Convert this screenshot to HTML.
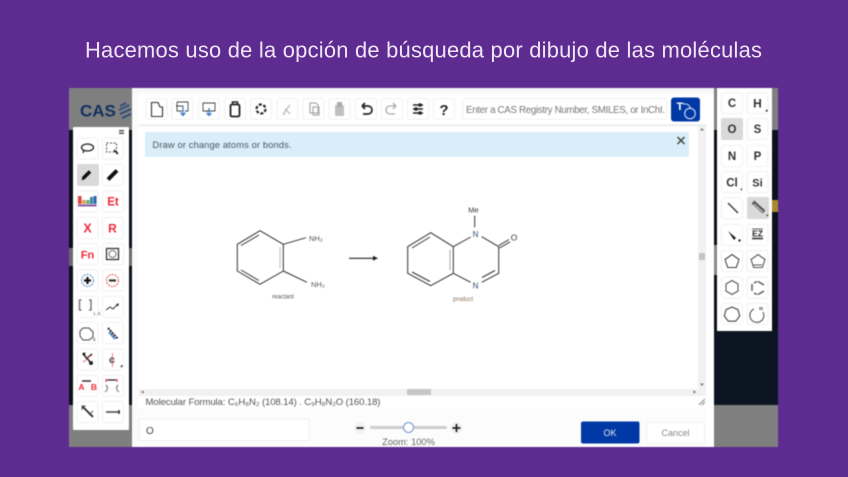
<!DOCTYPE html>
<html lang="es"><head><meta charset="utf-8"><title>Dibujo de moléculas</title>
<style>
html,body{margin:0;padding:0;width:848px;height:477px;overflow:hidden;background:#5e2b90}
svg{display:block;font-family:"Liberation Sans",sans-serif}
.b{fill:#fff;stroke:#f1f1f1;stroke-width:1}
.i{fill:none;stroke:#222;stroke-width:1.3}
.g{fill:none;stroke:#aaa;stroke-width:1.2}
.m{fill:none;stroke:#444;stroke-width:.9}
.blur{filter:blur(.55px)}
.tb{filter:blur(.2px)}
</style></head><body>
<svg width="848" height="477" viewBox="0 0 848 477" xmlns="http://www.w3.org/2000/svg">
<rect width="848" height="477" fill="#5e2b90"/>
<text class="tb" x="85" y="57.500" font-size="21.900" fill="#eee6f4" textLength="677" lengthAdjust="spacing">Hacemos uso de la opción de búsqueda por dibujo de las moléculas</text>
<g class="blur">
<!-- backdrop -->
<rect x="69" y="88" width="709" height="359" fill="#7f7f7f"/>
<rect x="69" y="130" width="709" height="275" fill="#0a1119"/>
<rect x="69" y="248" width="4" height="18" fill="#6a6a6a"/>
<rect x="129" y="248" width="3" height="18" fill="#6a6a6a"/>
<rect x="714" y="245" width="3" height="30" fill="#8a8a8a"/>
<rect x="772" y="200" width="6" height="12" fill="#a88a2c"/>
<rect x="714" y="331" width="64" height="74" fill="#0b1622"/>
<text x="80" y="116.500" font-size="17" font-weight="bold" fill="#12305f">CAS</text>
<path d="M120 106l6-3M119 110l10-5M120 114l11-5M122 118l9-4" stroke="#2c4a78" stroke-width="1.800" fill="none"/>
<!-- dialog -->
<rect x="132" y="88" width="582" height="359" fill="#fff"/>
<rect x="132" y="88" width="582" height="5" fill="#f7f7f7"/>
<rect x="132" y="93" width="7" height="354" fill="#fbfbfb"/>
<rect x="139" y="124.500" width="567" height="1.500" fill="#e8e8e8"/>
<!-- top toolbar -->
<rect class="b" x="146" y="98.500" width="21" height="21" rx="2"/>
<rect class="b" x="172" y="98.500" width="21" height="21" rx="2"/>
<rect class="b" x="198.500" y="98.500" width="21" height="21" rx="2"/>
<rect class="b" x="224.500" y="98.500" width="21" height="21" rx="2"/>
<rect class="b" x="250.500" y="98.500" width="21" height="21" rx="2"/>
<rect class="b" x="277" y="98.500" width="21" height="21" rx="2"/>
<rect class="b" x="303" y="98.500" width="21" height="21" rx="2"/>
<rect class="b" x="329" y="98.500" width="21" height="21" rx="2"/>
<rect class="b" x="355.500" y="98.500" width="21" height="21" rx="2"/>
<rect class="b" x="381.500" y="98.500" width="21" height="21" rx="2"/>
<rect class="b" x="407.500" y="98.500" width="21" height="21" rx="2"/>
<rect class="b" x="433.500" y="98.500" width="21" height="21" rx="2"/>
<!-- icons top -->
<path d="M151.500 116.500V102.500h6.500l2 4.500h2.500v9.500z" fill="none" stroke="#333" stroke-width="1.100"/>
<path d="M177 102h11v9h-3M177 102v9h5M176 106h7" class="m"/><path d="M183 106v9M180.500 112.500l2.500 3 2.500-3" fill="none" stroke="#3d7cc4" stroke-width="1.300"/>
<path d="M203 103h12v8h-12zM207 111v1" class="m"/><path d="M209 108v7M206.500 113l2.500 2.500 2.500-2.500" fill="none" stroke="#3d7cc4" stroke-width="1.300"/>
<rect x="230.500" y="104.500" width="9" height="12" rx="1.500" fill="none" stroke="#222" stroke-width="1.800"/><path d="M232.500 104.500v-2.500h5v2.500" fill="none" stroke="#222" stroke-width="1.500"/>
<circle cx="261" cy="109" r="4.500" fill="none" stroke="#222" stroke-width="2.200" stroke-dasharray="3 1.700"/>
<path d="M283 114l7-9M290 114l-5-5M283 113l2 2" fill="none" stroke="#bbb" stroke-width="1.300"/>
<path d="M310 103h6l2 2v8h-8zM313 107h6v8h-6z" class="g"/>
<rect x="335" y="105" width="9" height="11" rx="1" fill="#c0c0c0"/><rect x="337" y="102" width="5" height="5" fill="#aaa"/>
<path d="M362 106h6a4 4 0 010 8h-5M362 106l3-3M362 106l3 3" fill="none" stroke="#222" stroke-width="1.700"/>
<path d="M396 106h-6a4 4 0 000 8h5M396 106l-3-3M396 106l-3 3" fill="none" stroke="#aaa" stroke-width="1.300"/>
<path d="M413 105h10M413 109h10M413 113h10" stroke="#222" stroke-width="1.400"/><circle cx="420" cy="105" r="1.800" fill="#222"/><circle cx="416" cy="109" r="1.800" fill="#222"/><circle cx="420" cy="113" r="1.800" fill="#222"/>
<text x="444" y="115" font-size="15" font-weight="bold" text-anchor="middle" fill="#222">?</text>
<!-- search -->
<rect class="b" x="463" y="98.500" width="204" height="21" rx="2"/>
<text x="466" y="113" font-size="9.800" fill="#777" textLength="199" lengthAdjust="spacing">Enter a CAS Registry Number, SMILES, or InChI.</text>
<rect x="671" y="97.500" width="29" height="24" rx="3" fill="#0039a6"/>
<text x="676.500" y="110" font-size="11" font-weight="bold" fill="#fff">T</text>
<circle cx="690" cy="113.500" r="5.300" fill="none" stroke="#dfe8f7" stroke-width="1"/><path d="M683 104c4-.5 7 1 7.500 5" fill="none" stroke="#dfe8f7" stroke-width="1"/>
<!-- banner -->
<rect x="145" y="132" width="544" height="25" rx="1" fill="#d9eef9"/>
<text x="152.500" y="148" font-size="9.300" fill="#485460" textLength="139">Draw or change atoms or bonds.</text>
<path d="M677.500 137l7 7M684.500 137l-7 7" stroke="#444" stroke-width="1.500"/>
<!-- scrollbars -->
<rect x="698" y="126" width="8" height="270" fill="#f1f1f1"/>
<rect x="699" y="253" width="6" height="7" fill="#c4c4c4"/>
<path d="M702 128l-2 2.500h4zM702 386l-2-2.500h4z" fill="#777"/>
<rect x="139" y="389" width="567" height="7" fill="#f1f1f1"/>
<rect x="407" y="389" width="24" height="6" fill="#c6c6c6"/>
<path d="M141 392l2.500-1.500v3zM696 392l-2.500-1.500v3z" fill="#666"/>
<!-- formula -->
<text x="145.500" y="405" font-size="9.600" fill="#555" textLength="235">Molecular Formula: C₆H₈N₂ (108.14) . C₉H₈N₂O (160.18)</text>
<path d="M699 405l6-6M702 405l3-3" stroke="#888" stroke-width="1"/>
<!-- bottom -->
<rect x="139" y="408" width="567" height="39" fill="#fcfcfc"/>
<rect x="139" y="419" width="170" height="22" rx="2" fill="#fff" stroke="#eee"/>
<text x="146" y="434" font-size="10" fill="#444">O</text>
<circle cx="360" cy="428" r="5.500" fill="#f2f2f2"/><path d="M356.500 428h7" stroke="#222" stroke-width="1.800"/>
<rect x="370" y="426" width="77" height="3" rx="1.500" fill="#cecece"/>
<circle cx="408.500" cy="427.500" r="5" fill="#fff" stroke="#6d94cf" stroke-width="1"/>
<circle cx="456.500" cy="428" r="6" fill="#f2f2f2"/><path d="M452.500 428h8M456.500 424v8" stroke="#222" stroke-width="1.800"/>
<text x="408.500" y="445" font-size="9.300" fill="#666" text-anchor="middle">Zoom: 100%</text>
<rect x="581" y="421.500" width="58.500" height="22" rx="2" fill="#0039a6"/>
<text x="610" y="436" font-size="9" fill="#e4ebf7" text-anchor="middle">OK</text>
<rect class="b" x="646.500" y="422.500" width="58" height="21" rx="2"/>
<text x="675.500" y="436" font-size="9" fill="#888" text-anchor="middle">Cancel</text>
<!-- molecules -->
<g fill="none" stroke="#333" stroke-width="1">
<path d="M260 230.700L283.300 244.300V271L260 284.300L237.300 271V244.300Z"/>
<path d="M241 245.500L259 235M241 270L259 280.500"/><path d="M280 247V268" stroke="#bbb"/>
<path d="M283.300 244.300L306 237.700M283.300 271L307 282.300"/>
<path d="M349 258.300H373" stroke="#222" stroke-width="1.100"/>
<path d="M430.700 232.700L453.300 246.700V273.300L430.700 285.700L407.700 273.300V246.700Z"/>
<path d="M412 248L430 237M412 272L430 281.500"/><path d="M450 250V270" stroke="#aaa"/>
<path d="M453.300 246.700L470.700 237M453.300 273.300L470.700 282.300M481.700 236.700L498.700 246.700V273.300L481.700 282.300M495 270.500L482 277.500M474.700 215.700V227.300"/>
<path d="M498.700 245.700L509 239.500M499.700 248L510 241.800"/>
</g>
<path d="M373 255.800l5 2.500-5 2.500z" fill="#222"/>
<g font-size="7.500" fill="#555">
<text x="309" y="241">NH₂</text><text x="311" y="287">NH₂</text>
<text x="283" y="298.500" font-size="6" text-anchor="middle">reactant</text>
<text x="463" y="301" font-size="6" text-anchor="middle" fill="#8a6a50">product</text>
<text x="473.500" y="212.500" text-anchor="middle" fill="#333">Me</text>
<text x="475.500" y="237" text-anchor="middle" font-size="8" fill="#2f4a70">N</text>
<text x="475.500" y="288.500" text-anchor="middle" font-size="8" fill="#2f4a70">N</text>
<text x="514" y="240.500" text-anchor="middle" font-size="8.500" fill="#333">O</text>
</g>
<!-- left toolbar -->
<rect x="73" y="127" width="56" height="303" rx="1" fill="#fff"/>
<path d="M119 130h5v1.500h-5zM119 132.500h5v1.500h-5z" fill="#555"/>
<rect class="b" x="77" y="138" width="21" height="21" rx="2"/><rect class="b" x="102.500" y="138" width="21" height="21" rx="2"/>
<rect x="77" y="164" width="22" height="22" rx="2" fill="#d9d9d9"/><rect class="b" x="102.500" y="164.500" width="21" height="21" rx="2"/>
<rect class="b" x="77" y="191" width="21" height="21" rx="2"/><rect class="b" x="102.500" y="191" width="21" height="21" rx="2"/>
<rect class="b" x="77" y="217.500" width="21" height="21" rx="2"/><rect class="b" x="102.500" y="217.500" width="21" height="21" rx="2"/>
<rect class="b" x="77" y="243.500" width="21" height="21" rx="2"/><rect class="b" x="102.500" y="243.500" width="21" height="21" rx="2"/>
<rect class="b" x="77" y="270" width="21" height="21" rx="2"/><rect class="b" x="102.500" y="270" width="21" height="21" rx="2"/>
<rect class="b" x="77" y="296.500" width="21" height="21" rx="2"/><rect class="b" x="102.500" y="296.500" width="21" height="21" rx="2"/>
<rect class="b" x="77" y="322.500" width="21" height="21" rx="2"/><rect class="b" x="102.500" y="322.500" width="21" height="21" rx="2"/>
<rect class="b" x="77" y="349" width="21" height="21" rx="2"/><rect class="b" x="102.500" y="349" width="21" height="21" rx="2"/>
<rect class="b" x="77" y="375.500" width="21" height="21" rx="2"/><rect class="b" x="102.500" y="375.500" width="21" height="21" rx="2"/>
<rect class="b" x="77" y="401.500" width="21" height="21" rx="2"/><rect class="b" x="102.500" y="401.500" width="21" height="21" rx="2"/>
<!-- left icons -->
<ellipse cx="87.500" cy="147.500" rx="6" ry="3.500" class="i" stroke-width="1.100"/><path d="M84 150l-1 3" class="i" stroke-width="1.100"/>
<rect x="106.500" y="143" width="10" height="9" fill="none" stroke="#555" stroke-width="1.100" stroke-dasharray="2 1.500"/><path d="M114 150l4 4" stroke="#222" stroke-width="1.600"/>
<path d="M83 178.500l7-7" stroke="#111" stroke-width="3.500"/><path d="M82 180l1.500-2" stroke="#111" stroke-width="1.500"/>
<path d="M108 179.500l9-9" stroke="#111" stroke-width="4"/>
<rect x="78" y="196" width="3.500" height="8" fill="#e0443e"/><rect x="82" y="200" width="4" height="4" fill="#d9a35c"/><rect x="86.500" y="200" width="3" height="4" fill="#6aa37a"/><rect x="90" y="197" width="3" height="7" fill="#2b8a9a"/><rect x="93.500" y="196" width="3" height="8" fill="#3060a8"/><rect x="78" y="204.500" width="18.500" height="2" fill="#8a5ca8"/>
<g font-weight="bold" fill="#ee2b3a" text-anchor="middle">
<text x="113" y="205.500" font-size="11.500">Et</text>
<text x="87.500" y="232.500" font-size="12.500">X</text>
<text x="112.500" y="232.500" font-size="12">R</text>
<text x="87.500" y="258.500" font-size="11">Fn</text>
<text x="81.500" y="390" font-size="8.500">A</text>
<text x="94" y="390" font-size="8.500">B</text>
</g>
<rect x="106.500" y="248.500" width="12" height="11" fill="none" stroke="#333" stroke-width="1.300"/><circle cx="112.500" cy="254" r="3.500" fill="none" stroke="#777" stroke-width="1.100"/>
<circle cx="87.500" cy="280.500" r="6" fill="none" stroke="#4f86cc" stroke-width="1" stroke-dasharray="2 1"/><path d="M84 280.500h7M87.500 277v7" stroke="#111" stroke-width="2.200"/>
<circle cx="112.500" cy="280.500" r="6" fill="none" stroke="#ee4a55" stroke-width="1" stroke-dasharray="2 1"/><path d="M109 280.500h7" stroke="#333" stroke-width="2.200"/>
<path d="M81.500 300h-2v10h2M89 300h2v10h-2" fill="none" stroke="#666" stroke-width="1.300"/><text x="93" y="315" font-size="4.500" fill="#555">1..6</text>
<path d="M106 310l4-3 3 2 4-4" fill="none" stroke="#333" stroke-width="1"/><path d="M116 304l3-.5-1 3z" fill="#222"/>
<path d="M83 328h6l4 4v5l-4 3h-6l-3-4v-5z" fill="none" stroke="#444" stroke-width="1"/><text x="93" y="341" font-size="4.500" fill="#333">8</text>
<path d="M108 328l10 11" stroke="#222" stroke-width="2" stroke-dasharray="2 1"/><path d="M109 332l6 7" stroke="#4f86cc" stroke-width="2"/>
<path d="M83 354l9 10M92 354l-6 5" stroke="#222" stroke-width="1.500"/><circle cx="84" cy="354" r="1.500" fill="#222"/><circle cx="91" cy="363" r="2" fill="#222"/><path d="M87 358l5-3M83 362l3-2" stroke="#ee4a55" stroke-width=".8"/>
<text x="112" y="364" font-size="11" font-weight="bold" fill="#555" text-anchor="middle">¢</text><path d="M112.500 353v14" stroke="#ee5560" stroke-width=".7"/><path d="M120 367l2.500-2.500v2.500z" fill="#222"/>
<path d="M82 381h9" stroke="#333" stroke-width="1.500"/>
<path d="M107 380h9" stroke="#222" stroke-width="1.300"/><path d="M106 379v3M117 379v3" stroke="#ee2b3a" stroke-width="1.200"/>
<path d="M106 385c2 2 2 5-1 7M118 385c-2 2-2 5 1 7" fill="none" stroke="#666" stroke-width="1"/>
<path d="M82 406l11 11" stroke="#222" stroke-width="1.700"/><path d="M82 406l3 0-3 3zM89 415l4-4" stroke="#555" fill="#222"/>
<path d="M106 412h14" stroke="#444" stroke-width="1.500"/><path d="M119 410v4" stroke="#222" stroke-width="1.300"/>
<!-- right toolbar -->
<rect x="717" y="88" width="55" height="243" fill="#fff"/>
<rect class="b" x="721.500" y="92.500" width="21" height="21" rx="2"/><rect class="b" x="747" y="92.500" width="21" height="21" rx="2"/>
<rect x="721" y="118" width="22" height="22" rx="2" fill="#d9d9d9"/><rect class="b" x="747" y="118.500" width="21" height="21" rx="2"/>
<rect class="b" x="721.500" y="145.500" width="21" height="21" rx="2"/><rect class="b" x="747" y="145.500" width="21" height="21" rx="2"/>
<rect class="b" x="721.500" y="171.500" width="21" height="21" rx="2"/><rect class="b" x="747" y="171.500" width="21" height="21" rx="2"/>
<rect class="b" x="721.500" y="198" width="21" height="21" rx="2"/><rect x="747" y="197" width="22" height="22" rx="2" fill="#d9d9d9"/>
<rect class="b" x="721.500" y="224.500" width="21" height="21" rx="2"/><rect class="b" x="747" y="224.500" width="21" height="21" rx="2"/>
<rect class="b" x="721.500" y="250.500" width="21" height="21" rx="2"/><rect class="b" x="747" y="250.500" width="21" height="21" rx="2"/>
<rect class="b" x="721.500" y="277" width="21" height="21" rx="2"/><rect class="b" x="747" y="277" width="21" height="21" rx="2"/>
<rect class="b" x="721.500" y="303.500" width="21" height="21" rx="2"/><rect class="b" x="747" y="303.500" width="21" height="21" rx="2"/>
<g font-size="11.500" font-weight="bold" fill="#333" text-anchor="middle">
<text x="732" y="107">C</text><text x="757.500" y="107.500" font-size="12">H</text>
<text x="732" y="133">O</text><text x="757.500" y="133">S</text>
<text x="732" y="160">N</text><text x="757.500" y="160">P</text>
<text x="732" y="186.500">Cl</text><text x="757.500" y="186.500" font-size="11">Si</text>
</g>
<path d="M765 111.500l2.500-2.500v2.500zM740 190l2-2v2zM766 216l2-2v2z" fill="#222"/>
<path d="M728 203l10 10" stroke="#333" stroke-width="1.300"/>
<path d="M753 202l11 10" stroke="#555" stroke-width="4"/><path d="M754 204l9 8" stroke="#ddd" stroke-width="1"/>
<path d="M728 231l8 7-2 2z" fill="#111"/><circle cx="739.500" cy="240.500" r="1.200" fill="#222"/>
<text x="757.500" y="236.500" font-size="8.500" font-weight="bold" fill="#222" text-anchor="middle">EZ</text><path d="M752 238.500h11" stroke="#333" stroke-width="1.600"/><path d="M752 229h11" stroke="#333" stroke-width=".8"/>
<path d="M732 254.500l7 5-2.700 8h-8.600l-2.700-8z" fill="none" stroke="#444" stroke-width="1.100"/>
<path d="M758 254.500l7 5-2.700 8h-8.600l-2.700-8zM753 265h9" fill="none" stroke="#555" stroke-width="1.100"/>
<path d="M732 280.500l6 3.500v7l-6 3.500-6-3.500v-7z" fill="none" stroke="#555" stroke-width="1.100"/>
<path d="M758 281.500l6 3.500M764 291l-6 3.500M752 284v7M754 283l3-1.500M754 293l3 1.500" fill="none" stroke="#555" stroke-width="1.400"/>
<path d="M732 307l6 2.700 1.700 6.300-4 5.200h-7.400l-4-5.200 1.700-6.300z" fill="none" stroke="#444" stroke-width="1.100"/>
<path d="M754 309a7 7 0 109 3" fill="none" stroke="#555" stroke-width="1.100"/><path d="M760 307v3M762 307v3" stroke="#444" stroke-width="1"/>
</g>
</svg>
</body></html>
